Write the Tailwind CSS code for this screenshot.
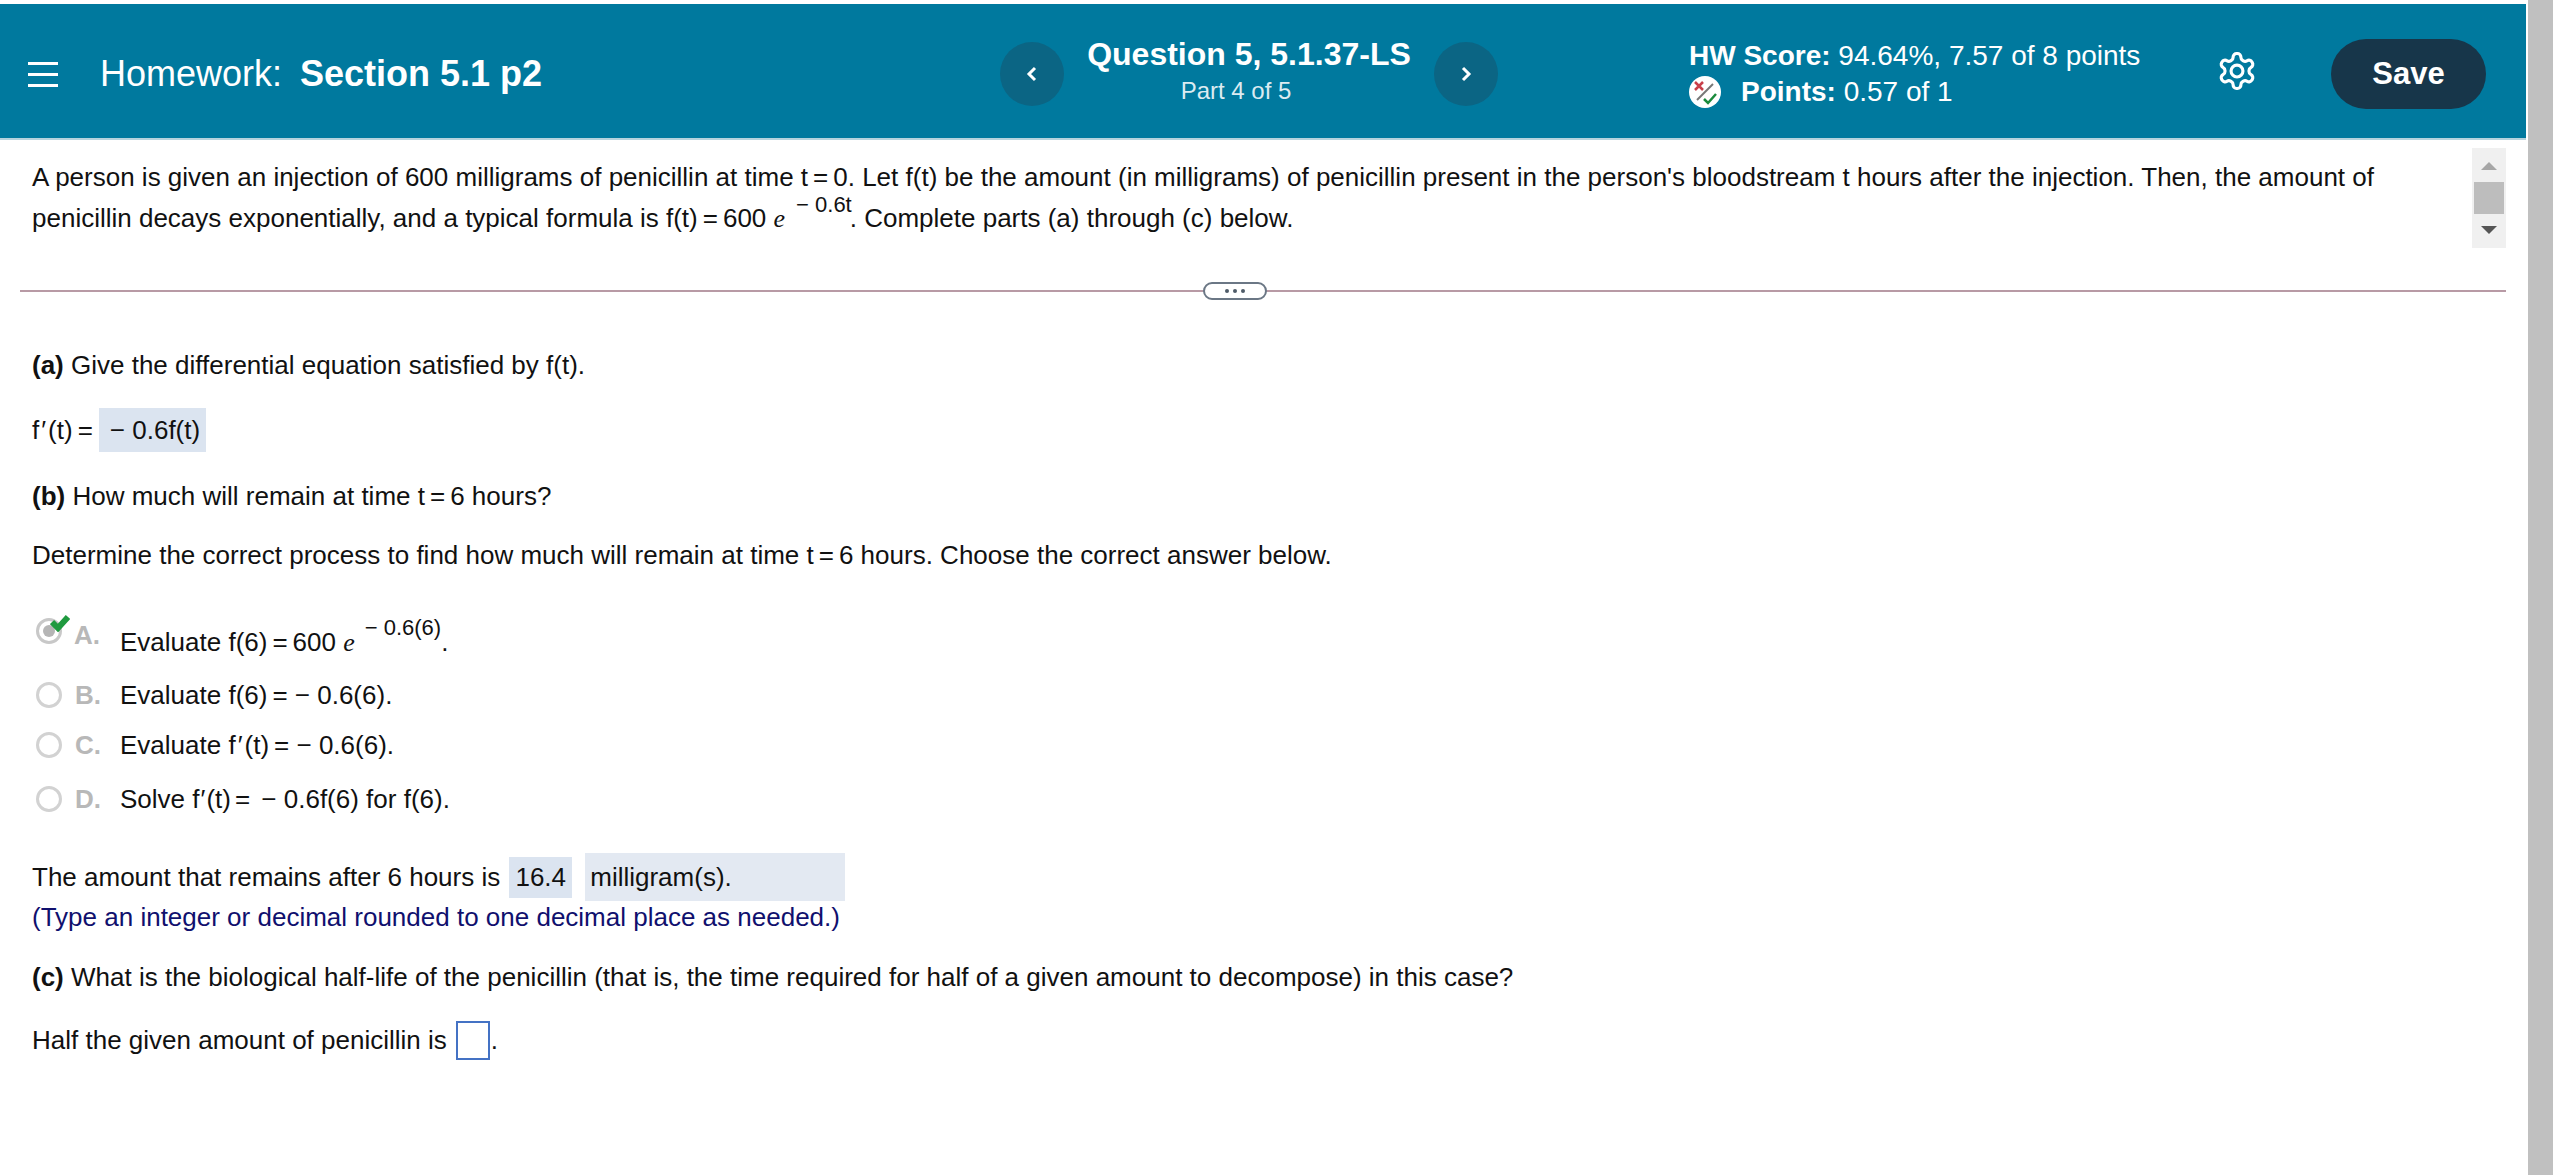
<!DOCTYPE html>
<html lang="en">

<head>
  <meta charset="UTF-8" />
  <title>Homework: Section 5.1 p2</title>
  <script src="https://cdn.jsdelivr.net/npm/@tailwindcss/browser@4"></script>
</head>

<body class="bg-white font-['Liberation_Sans',Arial,sans-serif] text-[26px] text-[#111] overflow-hidden">
  <div class="flex h-[1175px] w-[2553px] overflow-hidden">
    <div class="w-[2526px] shrink-0">

      <!-- header -->
      <header class="mt-[4px] h-[136px] pt-[6px] bg-[#00799e] border-b-2 border-[#b5d3dd] flex items-center text-white">
        <div class="w-[1000px] flex items-center shrink-0">
          <div class="ml-[28px] w-[30px] flex flex-col gap-[8px]">
            <span class="h-[3px] bg-white"></span>
            <span class="h-[3px] bg-white"></span>
            <span class="h-[3px] bg-white"></span>
          </div>
          <span class="ml-[42px] text-[36px]">Homework:</span>
          <span class="ml-[18px] text-[36px] font-bold">Section 5.1 p2</span>
        </div>
        <button class="w-[64px] h-[64px] rounded-full bg-[#0b6584] flex items-center justify-center shrink-0">
          <svg width="14" height="18" viewBox="0 0 14 18" fill="none" stroke="white" stroke-width="3"><path d="M10 3 4 9l6 6" /></svg>
        </button>
        <div class="w-[370px] text-center shrink-0 -mt-[3px]">
          <div class="text-[32px] font-bold leading-[37px]">Question 5, 5.1.37-LS</div>
          <div class="text-[24px] leading-[36px] text-[#dcebf1] -ml-[26px]">Part 4 of 5</div>
        </div>
        <button class="w-[64px] h-[64px] rounded-full bg-[#0b6584] flex items-center justify-center shrink-0">
          <svg width="14" height="18" viewBox="0 0 14 18" fill="none" stroke="white" stroke-width="3"><path d="m4 3 6 6-6 6" /></svg>
        </button>
        <div class="ml-[191px] w-[516px] shrink-0 text-[28px]">
          <div class="leading-[36px]"><b>HW Score:</b> 94.64%, 7.57 of 8 points</div>
          <div class="flex items-center leading-[36px]">
            <svg width="32" height="32" viewBox="0 0 32 32" class="shrink-0">
              <circle cx="16" cy="16" r="16" fill="white" />
              <path d="m6 6 8 8M14 6l-8 8" stroke="#c8404a" stroke-width="2.5" />
              <path d="M8 24 24 8" stroke="#777" stroke-width="2" />
              <path d="m15 23 4 4 8-9" fill="none" stroke="#1a8a3c" stroke-width="2.5" />
            </svg>
            <span class="ml-[20px]"><b>Points:</b> 0.57 of 1</span>
          </div>
        </div>
        <svg width="42" height="42" viewBox="0 0 24 24" fill="none" stroke="white" stroke-width="1.8" class="shrink-0 -mt-[6px] ml-[11px]">
          <path d="M12.22 2h-.44a2 2 0 0 0-2 2v.18a2 2 0 0 1-1 1.73l-.43.25a2 2 0 0 1-2 0l-.15-.08a2 2 0 0 0-2.73.73l-.22.38a2 2 0 0 0 .73 2.73l.15.1a2 2 0 0 1 1 1.72v.51a2 2 0 0 1-1 1.74l-.15.09a2 2 0 0 0-.73 2.73l.22.38a2 2 0 0 0 2.73.73l.15-.08a2 2 0 0 1 2 0l.43.25a2 2 0 0 1 1 1.73V20a2 2 0 0 0 2 2h.44a2 2 0 0 0 2-2v-.18a2 2 0 0 1 1-1.73l.43-.25a2 2 0 0 1 2 0l.15.08a2 2 0 0 0 2.73-.73l.22-.39a2 2 0 0 0-.73-2.73l-.15-.08a2 2 0 0 1-1-1.74v-.5a2 2 0 0 1 1-1.74l.15-.09a2 2 0 0 0 .73-2.73l-.22-.38a2 2 0 0 0-2.73-.73l-.15.08a2 2 0 0 1-2 0l-.43-.25a2 2 0 0 1-1-1.73V4a2 2 0 0 0-2-2z" />
          <circle cx="12" cy="12" r="3.4" />
        </svg>
        <button class="ml-[73px] w-[155px] h-[70px] rounded-full bg-[#17364a] text-[31px] font-bold text-white shrink-0">Save</button>
      </header>

      <!-- question text -->
      <div class="h-[150px] pl-[32px] pr-[20px] pt-[8px] flex justify-between">
        <p class="leading-[41px] pt-[9px] whitespace-nowrap">
          A person is given an injection of 600 milligrams of penicillin at time t<span class="mx-[5px]">=</span>0. Let f(t) be the amount (in milligrams) of penicillin present in the person's bloodstream t hours after the injection. Then, the amount of<br />
          penicillin decays exponentially, and a typical formula is f(t)<span class="mx-[5px]">=</span>600 <span class="font-['Liberation_Serif',serif] italic">e</span><span class="ml-[11px] text-[22px] relative -top-[15px]">− 0.6t</span><span class="-ml-[2px]">. Complete parts (a) through (c) below.</span>
        </p>
        <div class="w-[34px] h-[100px] bg-[#f0f0f0] flex flex-col items-center justify-between py-[14px] shrink-0">
          <span class="w-0 h-0 border-x-[8px] border-x-transparent border-b-[8px] border-b-[#a6a6a6]"></span>
          <span class="w-[30px] h-[32px] bg-[#bdbdbd]"></span>
          <span class="w-0 h-0 border-x-[8px] border-x-transparent border-t-[8px] border-t-[#555]"></span>
        </div>
      </div>

      <!-- divider -->
      <div class="relative ml-[20px] mr-[20px] h-[2px] bg-[#b89aa5]">
        <span class="absolute left-[1183px] -top-[8px] w-[64px] h-[18px] rounded-full bg-white border-2 border-[#6b7785] flex items-center justify-center gap-[4px]">
          <i class="w-[4px] h-[4px] bg-[#4f5b68] rounded-full"></i>
          <i class="w-[4px] h-[4px] bg-[#4f5b68] rounded-full"></i>
          <i class="w-[4px] h-[4px] bg-[#4f5b68] rounded-full"></i>
        </span>
      </div>

      <!-- parts -->
      <div class="pl-[32px]">
        <div class="mt-[53px] h-[40px] flex items-center whitespace-pre"><b>(a)</b> Give the differential equation satisfied by f(t).</div>

        <div class="mt-[25px] h-[40px] flex items-center">
          <span>f<span class="mx-[2px]">′</span>(t)<span class="mx-[5px]">=</span></span>
          <span class="ml-[1px] w-[107px] h-[44px] bg-[#dbe4f0] flex items-center pl-[11px]">− 0.6f(t)</span>
        </div>

        <div class="mt-[26px] h-[40px] flex items-center whitespace-pre"><b>(b)</b> How much will remain at time t<span class="mx-[5px]">=</span>6 hours?</div>
        <div class="mt-[19px] h-[40px] flex items-center whitespace-pre">Determine the correct process to find how much will remain at time t<span class="mx-[5px]">=</span>6 hours. Choose the correct answer below.</div>

        <div class="mt-[47px] h-[40px] -ml-[32px] flex items-center relative">
          <span class="absolute left-[36px] -top-[4px] w-[26px] h-[26px] rounded-full border-[3px] border-[#c8c8c8] flex items-center justify-center">
            <i class="w-[12px] h-[12px] rounded-full bg-[#b5b5b5]"></i>
          </span>
          <svg width="20" height="18" viewBox="0 0 20 18" class="absolute left-[50px] -top-[8px]"><path d="m2 8 6 6L18 3" fill="none" stroke="#1f9a3f" stroke-width="6" /></svg>
          <b class="absolute left-[74px] -top-[6px] text-[#b8b8b8]">A.</b>
          <span class="ml-[120px] whitespace-pre">Evaluate f(6)<span class="mx-[5px]">=</span>600 <span class="font-['Liberation_Serif',serif] italic">e</span><span class="ml-[10px] text-[22px] relative -top-[16px]">− 0.6(6)</span>.</span>
        </div>

        <div class="mt-[13px] h-[40px] -ml-[32px] flex items-center">
          <span class="ml-[36px] w-[26px] h-[26px] rounded-full border-[3px] border-[#d2d2d2]"></span>
          <b class="ml-[13px] w-[45px] text-[#b8b8b8]">B.</b>
          <span>Evaluate f(6)<span class="ml-[5px]">=</span> − 0.6(6).</span>
        </div>

        <div class="mt-[10px] h-[40px] -ml-[32px] flex items-center">
          <span class="ml-[36px] w-[26px] h-[26px] rounded-full border-[3px] border-[#d2d2d2]"></span>
          <b class="ml-[13px] w-[45px] text-[#b8b8b8]">C.</b>
          <span>Evaluate f<span class="mx-[2px]">′</span>(t)<span class="ml-[5px]">=</span> − 0.6(6).</span>
        </div>

        <div class="mt-[14px] h-[40px] -ml-[32px] flex items-center">
          <span class="ml-[36px] w-[26px] h-[26px] rounded-full border-[3px] border-[#d2d2d2]"></span>
          <b class="ml-[13px] w-[45px] text-[#b8b8b8]">D.</b>
          <span>Solve f<span class="mx-[1px]">′</span>(t)<span class="mx-[4px]">=</span> − 0.6f(6) for f(6).</span>
        </div>

        <div class="mt-[38px] h-[40px] flex items-center">
          <span>The amount that remains after 6 hours is</span>
          <span class="ml-[9px] w-[63px] h-[41px] bg-[#dbe4f0] flex items-center justify-center">16.4</span>
          <span class="ml-[13px] w-[260px] h-[48px] bg-[#e3e9f2] flex items-center pl-[5px]">milligram(s).</span>
        </div>
        <div class="h-[40px] flex items-center text-[#10106e]">(Type an integer or decimal rounded to one decimal place as needed.)</div>

        <div class="mt-[20px] h-[40px] flex items-center whitespace-pre"><b>(c)</b> What is the biological half-life of the penicillin (that is, the time required for half of a given amount to decompose) in this case?</div>

        <div class="mt-[23px] h-[40px] flex items-center">
          <span>Half the given amount of penicillin is</span>
          <span class="ml-[9px] w-[34px] h-[39px] border-2 border-[#4472c4] bg-white"></span>
          <span class="ml-[1px]">.</span>
        </div>
      </div>
    </div>

    <!-- window scrollbar -->
    <div class="ml-[2px] flex-1 bg-[#c0c0c0]"></div>
  </div>
</body>

</html>
